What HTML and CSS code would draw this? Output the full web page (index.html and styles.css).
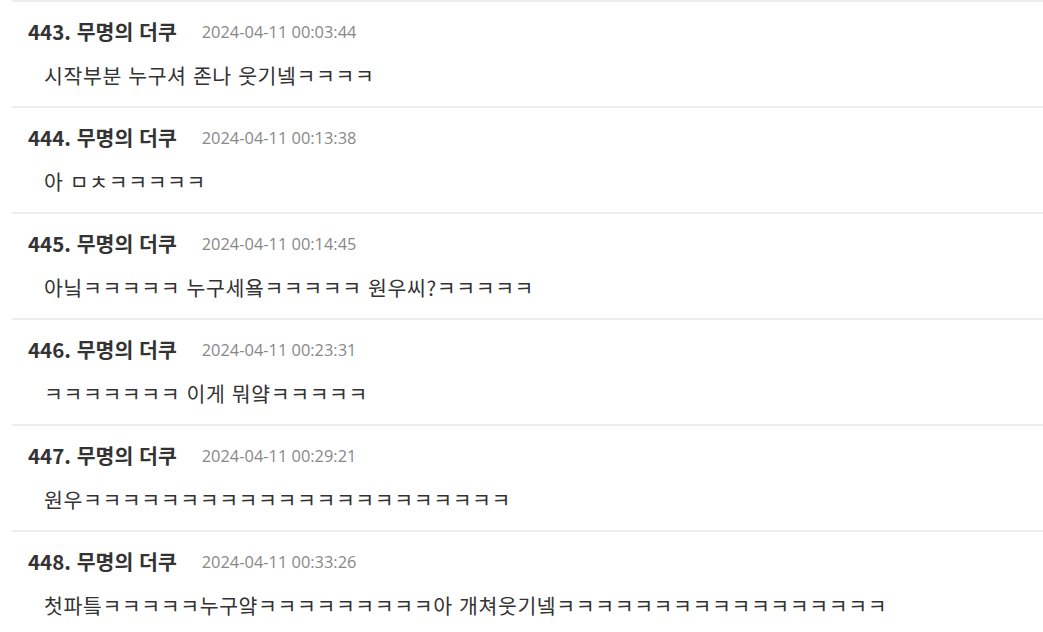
FILE: index.html
```html
<!DOCTYPE html>
<html lang="ko">
<head>
  <meta charset="UTF-8" />
  <title>댓글</title>
  <link rel="stylesheet" href="styles.css">
</head>
<body>
  <ul class="cmt-list">
    <li class="cmt">
      <div class="cmt-head"><span class="cmt-name">443. 무명의 더쿠</span><span class="cmt-date">2024-04-11 00:03:44</span></div>
      <div class="cmt-body">시작부분 누구셔 존나 웃기넼ㅋㅋㅋㅋ</div>
    </li>
    <li class="cmt">
      <div class="cmt-head"><span class="cmt-name">444. 무명의 더쿠</span><span class="cmt-date">2024-04-11 00:13:38</span></div>
      <div class="cmt-body">아 ㅁㅊㅋㅋㅋㅋㅋ</div>
    </li>
    <li class="cmt">
      <div class="cmt-head"><span class="cmt-name">445. 무명의 더쿠</span><span class="cmt-date">2024-04-11 00:14:45</span></div>
      <div class="cmt-body">아닠ㅋㅋㅋㅋㅋ 누구세욬ㅋㅋㅋㅋㅋ 원우씨?ㅋㅋㅋㅋㅋ</div>
    </li>
    <li class="cmt">
      <div class="cmt-head"><span class="cmt-name">446. 무명의 더쿠</span><span class="cmt-date">2024-04-11 00:23:31</span></div>
      <div class="cmt-body">ㅋㅋㅋㅋㅋㅋㅋ 이게 뭐얔ㅋㅋㅋㅋㅋ</div>
    </li>
    <li class="cmt">
      <div class="cmt-head"><span class="cmt-name">447. 무명의 더쿠</span><span class="cmt-date">2024-04-11 00:29:21</span></div>
      <div class="cmt-body">원우ㅋㅋㅋㅋㅋㅋㅋㅋㅋㅋㅋㅋㅋㅋㅋㅋㅋㅋㅋㅋㅋㅋ</div>
    </li>
    <li class="cmt">
      <div class="cmt-head"><span class="cmt-name">448. 무명의 더쿠</span><span class="cmt-date">2024-04-11 00:33:26</span></div>
      <div class="cmt-body">첫파틐ㅋㅋㅋㅋㅋ누구얔ㅋㅋㅋㅋㅋㅋㅋㅋㅋ아 개쳐웃기넼ㅋㅋㅋㅋㅋㅋㅋㅋㅋㅋㅋㅋㅋㅋㅋㅋㅋ</div>
    </li>
  </ul>
</body>
</html>
```

FILE: styles.css
```css
/* 기본 */
body {
  margin: 0;
  font-family: "Noto Sans CJK KR", "Open Sans", sans-serif;
  color: #333;
  background: #fff;
  overflow: hidden;
}
.cmt-list {
  list-style: none;
  margin: 0 0 0 12px;
  padding: 0;
}
/* 댓글 한 줄 */
.cmt {
  border-top: 2px solid #ededed;
  padding: 16px 16px 18px;
}
.cmt-head {
  display: flex;
  align-items: center;
  gap: 25px;
  height: 26px;
}
.cmt-name {
  font-size: 20.5px;
  font-weight: bold;
  color: #333;
}
.cmt-date {
  font-family: "Open Sans", sans-serif;
  font-size: 16.4px;
  color: #888;
}
.cmt-body {
  margin-top: 18px;
  padding-left: 16px;
  font-size: 20.5px;
  letter-spacing: 0.6px;
  line-height: 26px;
  color: #333;
  white-space: nowrap;
}
```
